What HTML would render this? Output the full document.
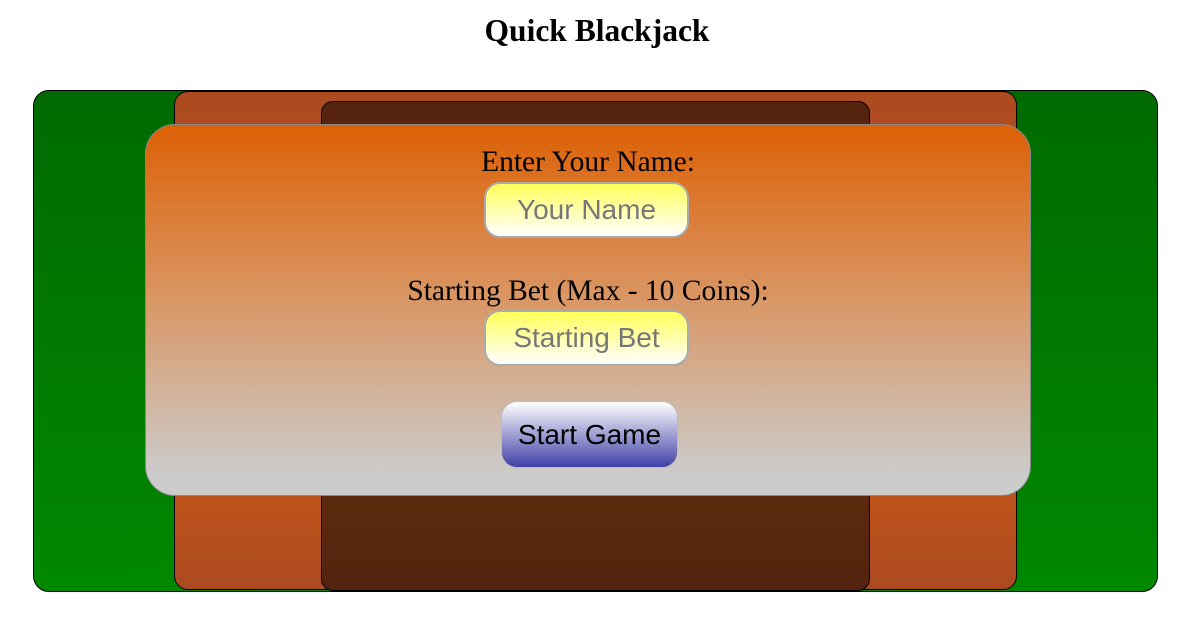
<!DOCTYPE html>
<html><head><style>
body{margin:0;width:1194px;height:624px;background:#fff;position:relative;overflow:hidden;font-family:"Liberation Serif",serif}
h1{position:absolute;top:13px;left:0;width:1194px;text-align:center;margin:0;font-size:31.5px;font-weight:bold}
.g{position:absolute;left:33px;top:90px;width:1123px;height:500px;border:1px solid #000;border-radius:16px;background:linear-gradient(#006a00,#008800)}
.b{position:absolute;left:174px;top:91px;width:841px;height:497px;border:1px solid #000;border-radius:14px;background:linear-gradient(#ac4a20,#c5561a 75%,#ac4a20)}
.d{position:absolute;left:321px;top:101px;width:547px;height:488px;border:1px solid #000;border-radius:12px;background:linear-gradient(#56230f,#5c2a0c 80%,#54230f)}
.o{position:absolute;left:145px;top:124px;width:884px;height:370px;border:1px solid #888;border-radius:30px;background:linear-gradient(#dd6005,#d99460 45%,#cccccc 95%)}
.l{position:absolute;left:0;width:100%;text-align:center;font-size:29.5px}
.i{position:absolute;left:338px;width:201px;height:52px;border:2px solid #aaa;border-radius:16px;background:linear-gradient(#ffff5a,#ffffff);box-sizing:content-box;font-family:"Liberation Sans",sans-serif;font-size:28px;color:#777;text-align:center;line-height:52px}
.btn{position:absolute;left:355px;top:276px;width:175px;height:65px;border:1px solid #bbb;border-radius:16px;background:linear-gradient(#ffffff,#4040a8);font-family:"Liberation Sans",sans-serif;font-size:28px;text-align:center;line-height:65px;color:#000}
</style></head><body>
<h1>Quick Blackjack</h1>
<div class="g"></div><div class="b"></div><div class="d"></div>
<div class="o">
<div class="l" style="top:21px">Enter Your Name:</div>
<div class="i" style="top:57px">Your Name</div>
<div class="l" style="top:150px">Starting Bet (Max - 10 Coins):</div>
<div class="i" style="top:185px">Starting Bet</div>
<div class="btn">Start Game</div>
</div>
</body></html>
